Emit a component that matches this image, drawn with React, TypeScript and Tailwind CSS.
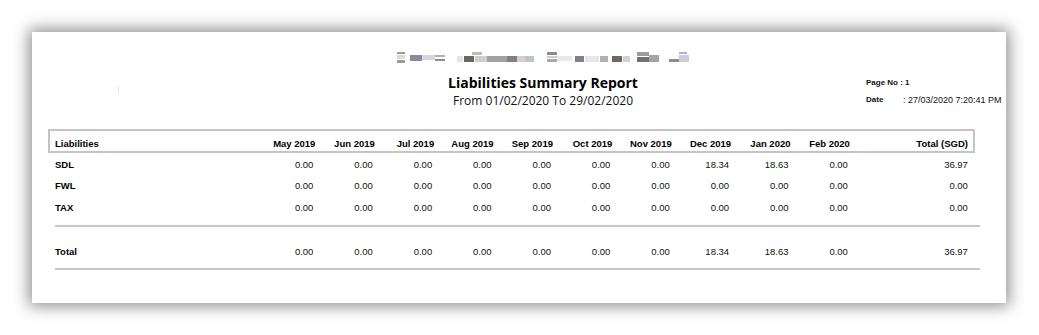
const months = ['May 2019', 'Jun 2019', 'Jul 2019', 'Aug 2019', 'Sep 2019', 'Oct 2019', 'Nov 2019', 'Dec 2019', 'Jan 2020', 'Feb 2020'];

const rows = [
  { name: 'SDL', values: ['0.00', '0.00', '0.00', '0.00', '0.00', '0.00', '0.00', '18.34', '18.63', '0.00'], total: '36.97' },
  { name: 'FWL', values: ['0.00', '0.00', '0.00', '0.00', '0.00', '0.00', '0.00', '0.00', '0.00', '0.00'], total: '0.00' },
  { name: 'TAX', values: ['0.00', '0.00', '0.00', '0.00', '0.00', '0.00', '0.00', '0.00', '0.00', '0.00'], total: '0.00' },
];

const totals = { values: ['0.00', '0.00', '0.00', '0.00', '0.00', '0.00', '0.00', '18.34', '18.63', '0.00'], total: '36.97' };

// pixelated (redacted) company name
const blocks: [number, number, number, number, string][] = [
  [0, 0, 8, 2, '#9a9a9a'], [0, 3, 8, 4, '#dcdcdc'], [0, 8, 8, 3, '#9c9c9c'],
  [13, 3, 12, 6, '#8a8a9c'], [25, 3, 13, 5, '#ddd3da'], [38, 3, 10, 2, '#b0b0b0'], [38, 7, 10, 2, '#8c8c8c'],
  [60, 4, 6, 6, '#f0e0e0'], [67, 4, 10, 6, '#6e6662'], [75, 0, 10, 3, '#bcbcbc'], [78, 4, 12, 6, '#cfcfcf'],
  [90, 4, 20, 6, '#a6a0a0'], [110, 4, 10, 6, '#877f7f'], [120, 4, 8, 6, '#d8d0d0'], [128, 4, 9, 6, '#bcc4c4'],
  [150, 0, 10, 3, '#8c8c8c'], [150, 4, 10, 2, '#cccccc'], [150, 7, 10, 3, '#a8a8a8'], [160, 4, 15, 5, '#f0e6e6'],
  [178, 4, 9, 6, '#808090'], [188, 4, 14, 6, '#e6e6e6'], [203, 4, 8, 6, '#b0b0b0'], [215, 4, 10, 6, '#706860'],
  [226, 4, 7, 6, '#d8d0d0'], [240, 0, 12, 4, '#9c9c9c'], [240, 5, 12, 5, '#727272'], [252, 3, 10, 7, '#a4a4a4'],
  [272, 7, 10, 3, '#8c8c8c'], [282, 0, 8, 2, '#b0b0c8'], [282, 3, 10, 7, '#cbcbe2'],
];

const cols = 'grid grid-cols-[201px_repeat(10,59.4px)_118px]';

const App = () => {
  return (
    <div className="min-h-screen bg-white pt-8 pl-8" style={{ fontFamily: '"Liberation Sans", Arial, sans-serif' }}>
      <div className="w-[974px] h-[271px] bg-white shadow-[0_0_15px_3px_rgba(0,0,0,0.45)] flex flex-col">

        {/* Report Header */}
        <div className="flex h-[97px]">
          <div className="w-[361px]">
            <div className="ml-[86px] mt-[54px] w-px h-[7px] bg-[#e4e4e4]"></div>
          </div>

          <div className="w-[300px] flex flex-col items-center pt-[20px]">
            <svg width="292" height="11" viewBox="0 0 292 11" className="block">
              {blocks.map(([x, y, w, h, c], i) => (
                <rect key={i} x={x} y={y} width={w} height={h} fill={c} />
              ))}
            </svg>
            <h1 className="mt-[10px] text-[14px] leading-[20px] font-bold text-black" style={{ fontFamily: '"Open Sans", sans-serif' }}>
              Liabilities Summary Report
            </h1>
            <p className="text-[12px] leading-[16px] font-medium text-[#111]" style={{ fontFamily: '"Open Sans", sans-serif' }}>
              From 01/02/2020 To 29/02/2020
            </p>
          </div>

          <div className="ml-[173px] pt-[45px] flex flex-col gap-[5px] text-[8px] leading-[12px] text-[#111]">
            <div className="font-bold">Page No : 1</div>
            <div className="flex">
              <span className="w-[37px] font-bold">Date</span>
              <span className="text-[9px]">: 27/03/2020 7:20:41 PM</span>
            </div>
          </div>
        </div>

        {/* Table */}
        <div className="ml-[16px] w-[927px] h-[24px] border-2 border-[#c4c4c4] pl-[5px] pr-[6px] pt-[6px] flex items-center">
          <div className={`${cols} w-full text-[9.5px] font-bold text-black`}>
            <div>Liabilities</div>
            {months.map((m) => (
              <div key={m} className="text-right whitespace-nowrap">{m}</div>
            ))}
            <div className="text-right">Total (SGD)</div>
          </div>
        </div>

        <div className="ml-[23px] mt-[1px] w-[912px] text-[9.5px] text-[#111]">
          {rows.map((r) => (
            <div key={r.name} className={`${cols} h-[21.5px] items-center`}>
              <div className="font-bold text-black">{r.name}</div>
              {r.values.map((v, i) => (
                <div key={i} className="text-right pr-[2px]">{v}</div>
              ))}
              <div className="text-right">{r.total}</div>
            </div>
          ))}
        </div>

        <div className="ml-[23px] mt-[6px] w-[925px] h-[2px] bg-[#c8c8c8]"></div>

        <div className={`ml-[23px] mt-[15px] w-[912px] h-[22px] items-center text-[9.5px] text-[#111] ${cols}`}>
          <div className="font-bold text-black">Total</div>
          {totals.values.map((v, i) => (
            <div key={i} className="text-right pr-[2px]">{v}</div>
          ))}
          <div className="text-right">{totals.total}</div>
        </div>

        <div className="ml-[23px] mt-[4px] w-[925px] h-[2px] bg-[#c8c8c8]"></div>
      </div>
    </div>
  );
};

export default App;
